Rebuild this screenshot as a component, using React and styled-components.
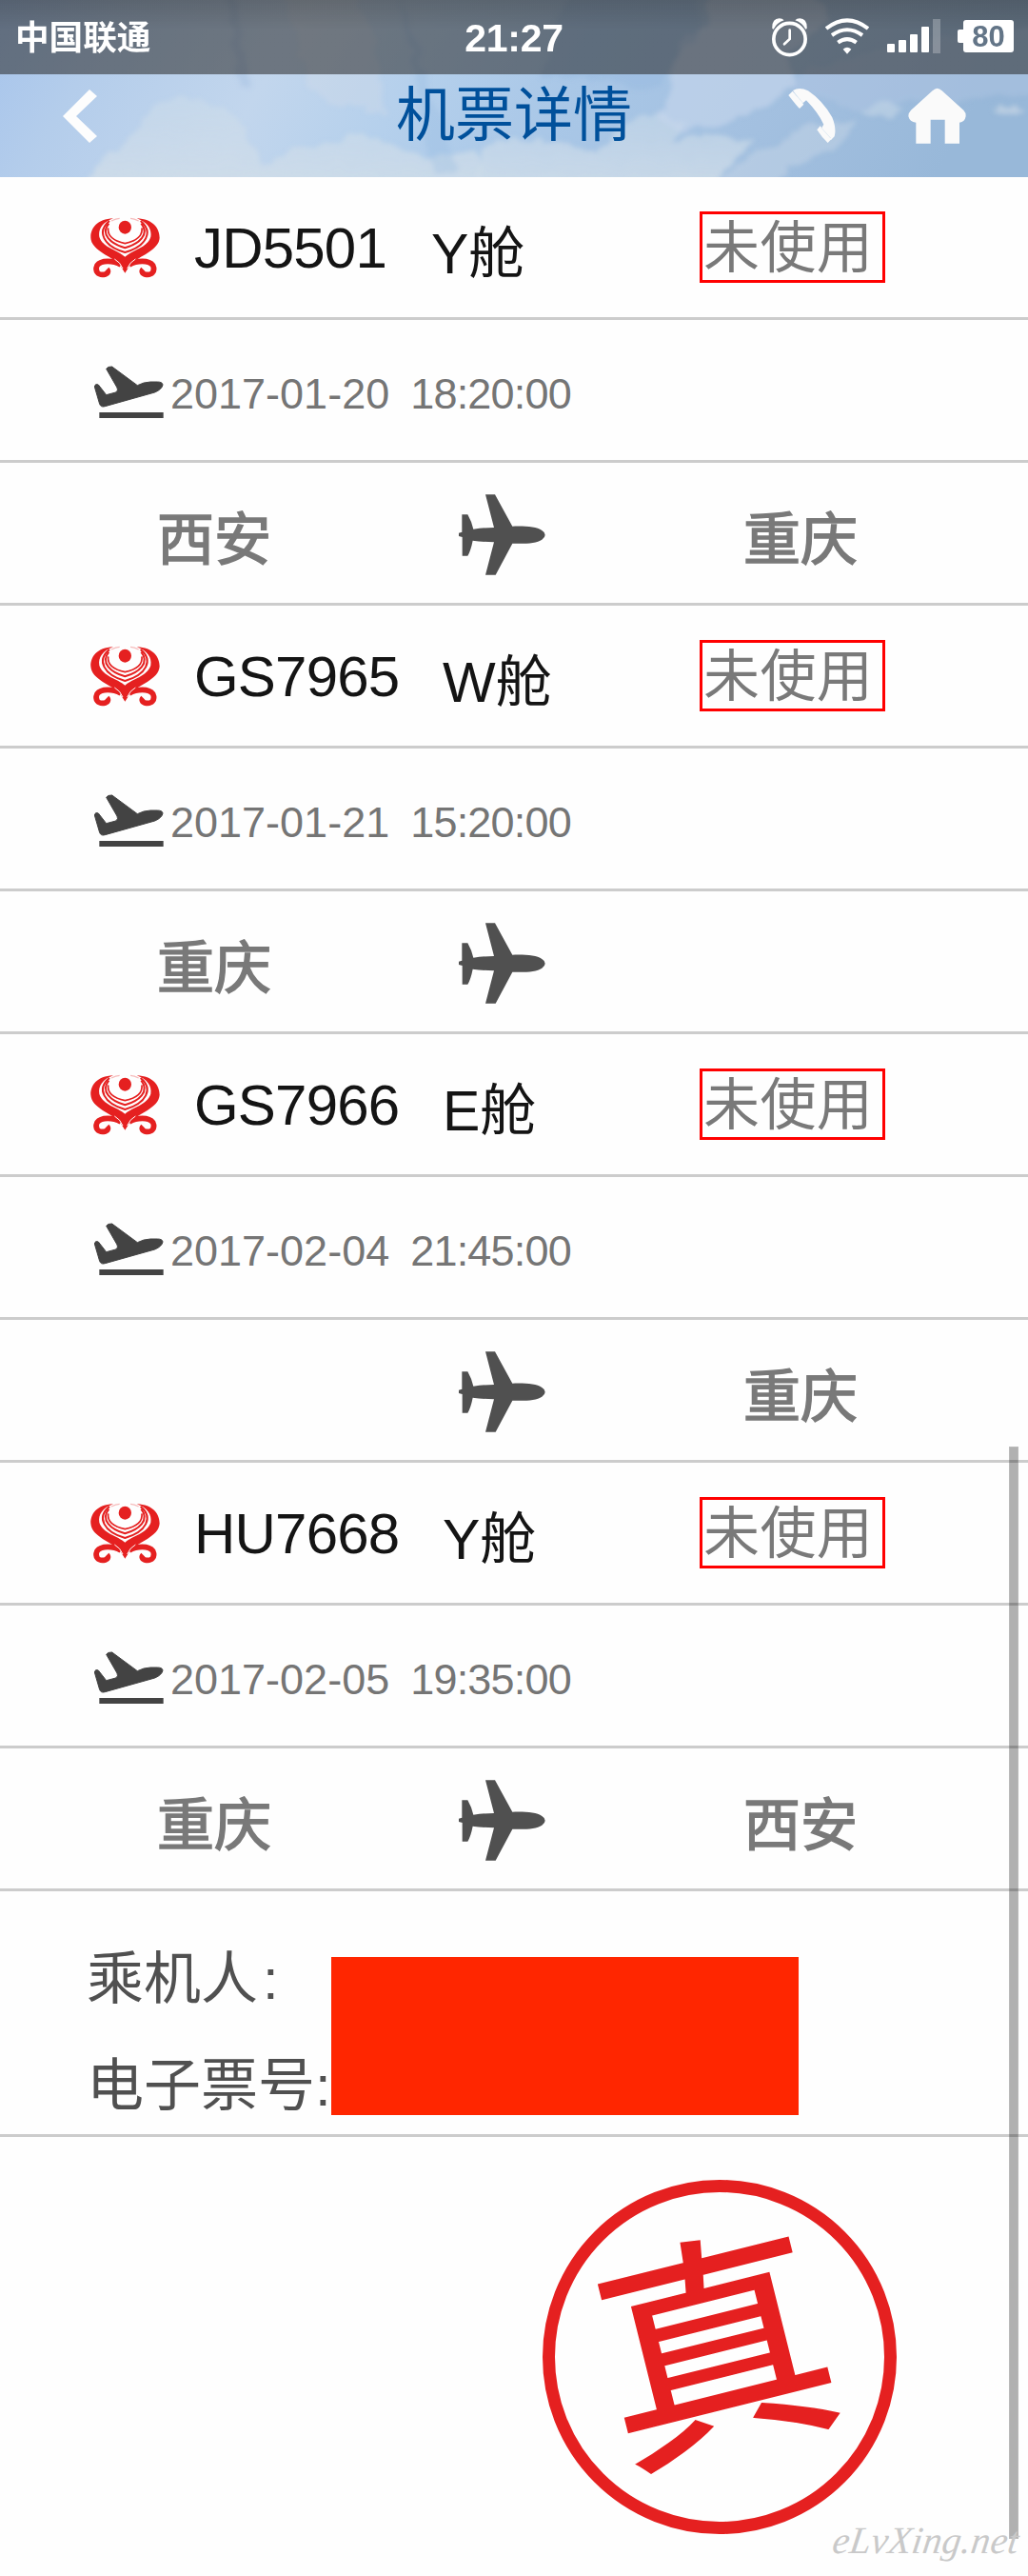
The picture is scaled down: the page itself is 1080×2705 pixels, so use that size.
import React from 'react'
import styled, { createGlobalStyle } from 'styled-components'

const GlobalStyle = createGlobalStyle`
    * {
        box-sizing: border-box;
    }
    body {
        margin: 0;
        background: #fefefe;
        font-family: "Liberation Sans", "Noto Sans CJK SC", sans-serif;
    }
    svg {
        display: block;
        flex: none;
    }
`

const Page = styled.div`
    position: relative;
    width: 1080px;
    height: 2705px;
    overflow: hidden;
    background: #fefefe;
`

const Header = styled.header`
    position: relative;
    height: 186px;
    overflow: hidden;
`

const SkyBackdrop = styled.svg`
    position: absolute;
    top: 0;
    left: 0;
`

const StatusBar = styled.div`
    position: relative;
    display: grid;
    grid-template-columns: 1fr auto 1fr;
    align-items: center;
    height: 78px;
    padding: 0 15px 0 16px;
    color: #fff;
    background: linear-gradient(rgba(36, 36, 36, 0.62), rgba(40, 40, 40, 0.55) 40%);
`

const Carrier = styled.span`
    font: bold 35.6px/40px "Noto Sans CJK SC", sans-serif;
    padding-bottom: 4px;
`

const Clock = styled.span`
    font-size: 41px;
    font-weight: bold;
    line-height: 44px;
    letter-spacing: -0.3px;
    padding: 2px 1px 0 0;
`

const StatusIcons = styled.div`
    display: flex;
    align-items: flex-start;
    justify-content: flex-end;
    height: 40px;
    gap: 19px;
`

const Battery = styled.div`
    display: flex;
    align-items: center;
    margin: 2px 0 0 -1px;

    &::before {
        content: "";
        width: 6px;
        height: 14px;
        border-radius: 2px 0 0 2px;
        background: #fff;
    }
`

const BatteryLevel = styled.span`
    width: 53px;
    height: 34px;
    border-radius: 3px;
    background: #fff;
    color: #637587;
    font-size: 31px;
    font-weight: bold;
    line-height: 36px;
    text-align: center;
`

const TitleBar = styled.div`
    position: relative;
    display: flex;
    align-items: flex-start;
    height: 108px;
    padding: 14px 66px;
`

const Title = styled.h1`
    flex: none;
    width: 248px;
    margin: -18px 164px 0 314px;
    color: #00509b;
    font: 400 62px/84px "Noto Sans CJK SC", sans-serif;
    white-space: nowrap;
`

const HomeLink = styled.a`
    margin-left: 76px;
`

const Row = styled.div`
    display: flex;
    align-items: center;
    height: 150px;
    border-bottom: 3px solid #ccc;
`

const FlightRow = styled(Row)`
    padding-left: 95px;
    color: #141414;
    font-size: 60px;
    line-height: 70px;
`

const FlightCode = styled.span`
    width: ${({ $width }) => $width}px;
    margin: 3px 0 0 36px;
    letter-spacing: -0.8px;
    white-space: nowrap;
`

const Cabin = styled.span`
    flex: 1;
    margin-top: 15px;
    font-size: 59px;
    white-space: nowrap;
`

const UseStatus = styled.span`
    flex: none;
    width: 195px;
    height: 75px;
    margin-right: 150px;
    padding-left: 1px;
    border: 3px solid #f00;
    color: #797979;
    font: 400 59px/62px "Noto Sans CJK SC", sans-serif;
    letter-spacing: 0.4px;
    white-space: nowrap;
`

const TimeRow = styled(Row)`
    padding: 4px 0 0 99px;
    color: #757575;
    font-size: 45px;
`

const FlightDate = styled.span`
    margin: 4px 0 0 7px;
`

const FlightTime = styled.span`
    margin: 4px 0 0 22px;
    letter-spacing: -0.8px;
`

const RouteRow = styled(Row)`
    padding: 3px 0 0 165px;
`

const City = styled.span`
    flex: none;
    width: 317px;
    margin-top: 1px;
    color: #797979;
    font: 400 60px/70px "Noto Sans CJK SC", sans-serif;
    -webkit-text-stroke: 1.6px #797979;

    svg + & {
        width: 240px;
        margin-left: 208px;
    }
`

const PassengerSection = styled.section`
    display: flex;
    height: 258px;
    padding: 0 0 0 91px;
    border-bottom: 3px solid #ccc;
`

const Labels = styled.div`
    width: 257px;
    padding-top: 34px;
    color: #505050;
    font: 400 60px/106px "Noto Sans CJK SC", sans-serif;
    white-space: nowrap;
`

const Latin = styled.span`
    font-family: "Liberation Sans", sans-serif;
    margin-left: ${({ $gap }) => $gap || 0}px;
`

const Redaction = styled.div`
    width: 491px;
    height: 166px;
    margin-top: 69px;
    background: #ff2600;
`

const StampArea = styled.div`
    display: flex;
    padding: 45px 0 0 570px;
`

const Stamp = styled.div`
    display: flex;
    align-items: center;
    justify-content: center;
    width: 372px;
    height: 372px;
    border: 13.5px solid #e52020;
    border-radius: 50%;
    color: #e52020;
`

const StampText = styled.span`
    font: 400 246px/246px "Noto Sans CJK SC", sans-serif;
    transform: translate(-9px, -24px) rotate(-14deg);
    -webkit-text-stroke: 1.5px #e52020;
`

const ScrollThumb = styled.div`
    position: absolute;
    top: 1519px;
    left: 1060px;
    width: 10px;
    height: 1147px;
    background: rgba(0, 0, 0, 0.3);
    box-shadow: inset 0 0 0 1px rgba(255, 255, 255, 0.12);
`

const Watermark = styled.span`
    position: absolute;
    right: 10px;
    bottom: 15px;
    color: #c9c9c9;
    font: italic 40px/44px "Liberation Serif", serif;
    letter-spacing: 0.3px;
    transform: skewX(-8deg);
`

const Sky = () => (
    <SkyBackdrop width="1080" height="186" viewBox="0 0 1080 186">
        <defs>
            <linearGradient id="sky" x1="0" x2="1" y1="0" y2="0.1">
                <stop offset="0" stopColor="#a6c4ec" />
                <stop offset="0.12" stopColor="#b4cdeb" />
                <stop offset="0.3" stopColor="#c2d6ed" />
                <stop offset="0.44" stopColor="#b5d0ec" />
                <stop offset="0.6" stopColor="#a9c7e7" />
                <stop offset="0.8" stopColor="#a3c0e0" />
                <stop offset="1" stopColor="#98b8d9" />
            </linearGradient>
            <linearGradient id="cloud" x1="0" x2="0" y1="0" y2="1">
                <stop offset="0" stopColor="#cddcea" stopOpacity="0.5" />
                <stop offset="1" stopColor="#d0dde8" stopOpacity="0.85" />
            </linearGradient>
            <filter id="soft" x="-10%" y="-10%" width="120%" height="120%">
                <feTurbulence type="fractalNoise" baseFrequency="0.05" numOctaves="3" seed="4" />
                <feDisplacementMap in="SourceGraphic" scale="16" xChannelSelector="R" yChannelSelector="G" />
                <feGaussianBlur stdDeviation="2.5" />
            </filter>
        </defs>
        <rect width="1080" height="186" fill="url(#sky)" />
        <g filter="url(#soft)">
            <path d="M80 202 L110 166 L135 148 L150 124 L172 106 L210 102 L250 122 L262 148 L280 172 L310 156 L345 150 L380 140 L420 156 L450 165 L500 158 L510 202Z" fill="url(#cloud)" />
            <path d="M500 202 L506 158 L540 145 L600 150 L625 160 L660 128 L690 118 L720 130 L705 150 L740 140 L790 150 L740 202Z" fill="url(#cloud)" />
            <path d="M740 202 L780 168 L820 148 L850 130 L900 128 L880 155 L830 175 L800 202Z" fill="#d0dde9" opacity="0.4" />
            <path d="M742 -15 L748 22 L718 40 L708 70 L706 100 L690 125 L720 140 L760 130 L790 118 L840 90 L828 60 L870 20 L850 -15Z" fill="#c8d7ec" opacity="0.6" />
            <path d="M828 92 L850 70 L900 60 L950 44 L1090 30 V100 L960 108 L900 118Z" fill="#b7c9e4" opacity="0.35" />
            <path d="M905 118 L930 108 L950 116 L935 124Z" fill="#ccdbea" opacity="0.5" />
            <path d="M1042 116 L1065 108 L1080 114 L1055 121Z" fill="#d0dce8" opacity="0.6" />
            <path d="M245 -15 L262 90 L250 90 L236 -15Z" fill="#9dbbe0" opacity="0.35" />
            <path d="M418 -15 L480 180 L455 180 L432 60Z" fill="#94b8e0" opacity="0.3" />
            <path d="M295 -15 L330 100 L405 120 L390 30 L370 -15Z" fill="#d4dde8" opacity="0.35" />
            <path d="M600 -15 L730 -15 L735 30 L690 90 L570 80Z" fill="#8fb4de" opacity="0.3" />
        </g>
    </SkyBackdrop>
)

const AlarmIcon = () => (
    <svg width="37" height="41" viewBox="33 29 111 123" fill="none" stroke="#fff">
        <path d="M34 62 Q32 32 56 30 Q66 30 71 36 Q48 44 38 64Z" fill="#fff" stroke="none" />
        <path d="M143 62 Q145 32 121 30 Q111 30 106 36 Q129 44 139 64Z" fill="#fff" stroke="none" />
        <circle cx="88.500" cy="95" r="50" strokeWidth="11" />
        <path d="M89 67 V95 L72 111" strokeWidth="8" strokeLinecap="round" />
    </svg>
)

const WifiIcon = () => (
    <svg width="46" height="38" viewBox="201 28 138 114" fill="none" stroke="#fff" strokeWidth="12">
        <path d="M204 61 Q270 9 336 61" />
        <path d="M222 82 Q270 48 318 82" />
        <path d="M241 105 Q270 84 299 105" />
        <path d="M257 126 Q270 115 283 126 L270 141Z" fill="#fff" stroke="none" />
    </svg>
)

const SignalIcon = () => (
    <svg width="56" height="37" viewBox="0 0 56 37" fill="#fff">
        <rect x="0" y="27" width="8" height="9" rx="1" />
        <rect x="12" y="23" width="8" height="13" rx="1" />
        <rect x="24" y="17" width="8" height="19" rx="1" />
        <rect x="36" y="9" width="8" height="27" rx="1" />
        <rect x="48" y="1" width="8" height="36" opacity="0.25" />
    </svg>
)

const BackIcon = () => (
    <svg width="36" height="60" viewBox="0 0 36 60">
        <path d="M0 30 L28 2 L36 9 L14 30 L36 51 L28 58Z" fill="#fdfdfd" />
    </svg>
)

const PhoneIcon = () => (
    <svg width="50" height="60" viewBox="83 246 150 180" fill="#fafafa">
        <path d="M98 255 Q118 242 146 256 Q192 287 222 340 Q236 376 229 400 L218 411 L186 378 L195 362 Q178 325 140 286 L127 297Z" />
        <path d="M84 270 L97 257 L132 299 L119 312 Q112 306 84 270Z" />
        <path d="M174 379 L184 367 L220 407 L208 420 Q190 404 174 379Z" />
        <path d="M101 260 L131 296 M187 372 L217 405" stroke="#d5e2ee" strokeWidth="2" />
    </svg>
)

const HomeIcon = () => (
    <svg width="61" height="60" viewBox="461 246 183 180">
        <path d="M553 248 Q560 248 568 256 L636 317 Q644 325 643 336 Q640 354 623 356 V422 H577 V347 H532 V422 H486 V356 Q466 354 462 336 Q462 325 470 317 L538 256 Q546 248 553 248Z" fill="#fafafa" />
    </svg>
)

const AirlineLogo = () => (
    <svg width="73" height="64" viewBox="32 38 219 192" fill="none" stroke="#e52020">
        <path d="M104 42 C52 44 32 74 33 103 C36 146 100 160 126 190 L141 214 L156 190 C182 160 247 146 250 103 C250 74 230 44 178 42 C212 54 226 76 222 100 C212 134 164 142 141 163 C118 142 70 134 60 100 C56 76 70 54 104 42Z" fill="#e52020" stroke="none" />
        <path d="M92 50 C50 84 74 130 141 149 C208 130 232 84 190 50" strokeWidth="6" />
        <path d="M90 58 C62 92 96 122 141 135 C186 122 220 92 192 58" strokeWidth="6" />
        <path d="M88 72 C84 104 118 116 141 121 C164 116 198 104 194 72" strokeWidth="5" />
        <path d="M98 50 Q112 42 124 42 M184 50 Q170 42 158 42" strokeWidth="4" opacity="0.3" />
        <ellipse cx="141" cy="70" rx="20" ry="21" fill="#e52020" stroke="none" />
        <path d="M128 188 C104 174 66 172 53 190 C44 210 58 221 74 219 C88 217 90 208 84 202" strokeWidth="17" />
        <path d="M154 188 C178 174 216 172 229 190 C238 210 224 221 208 219 C194 217 192 208 198 202" strokeWidth="17" />
        <path d="M108 170 Q126 180 134 200 M174 170 Q156 180 148 200" stroke="#fff" strokeWidth="3" />
    </svg>
)

const TakeoffIcon = () => (
    <svg width="73" height="56" viewBox="41 504 219 168" fill="#434343">
        <path d="M79 514 Q84 506 97 507 L177 566 Q196 556 218 555 H240 Q256 555 257 564 Q255 578 232 588 L75 632 Q62 636 58 625 L42 570 Q44 560 54 564 L79 596 L109 588 Q118 582 113 573Z" stroke="#434343" strokeWidth="3" />
        <rect x="57" y="651" width="202" height="18" />
    </svg>
)

const PlaneIcon = () => (
    <svg width="91" height="85" viewBox="38 25 273 255" fill="#505050">
        <path d="M122 26 H152 L207 126 C250 125 283 127 300 139 Q310 145 310 153 Q310 161 300 168 C283 180 250 181 207 180 L154 279 H122 L149 176 Q110 175 82 171 Q76 202 66 219 H49 V160 L38 157 V147 L48 144 V89 H66 Q78 110 84 135 Q115 130 149 130Z" />
    </svg>
)

const flights = [
    { code: 'JD5501', codeWidth: 249, cabin: 'Y舱', date: '2017-01-20', time: '18:20:00', from: '西安', to: '重庆' },
    { code: 'GS7965', codeWidth: 261, cabin: 'W舱', date: '2017-01-21', time: '15:20:00', from: '重庆', to: '' },
    { code: 'GS7966', codeWidth: 261, cabin: 'E舱', date: '2017-02-04', time: '21:45:00', from: '', to: '重庆' },
    { code: 'HU7668', codeWidth: 261, cabin: 'Y舱', date: '2017-02-05', time: '19:35:00', from: '重庆', to: '西安' },
]

const Flight = ({ code, codeWidth, cabin, date, time, from, to }) => (
    <>
        <FlightRow>
            <AirlineLogo />
            <FlightCode $width={codeWidth}>{code}</FlightCode>
            <Cabin>{cabin}</Cabin>
            <UseStatus>未使用</UseStatus>
        </FlightRow>
        <TimeRow>
            <TakeoffIcon />
            <FlightDate>{date}</FlightDate>
            <FlightTime>{time}</FlightTime>
        </TimeRow>
        <RouteRow>
            <City>{from}</City>
            <PlaneIcon />
            <City>{to}</City>
        </RouteRow>
    </>
)

const App = () => (
    <Page>
        <GlobalStyle />
        <Header>
            <Sky />
            <StatusBar>
                <Carrier>中国联通</Carrier>
                <Clock>21:27</Clock>
                <StatusIcons>
                    <AlarmIcon />
                    <WifiIcon />
                    <SignalIcon />
                    <Battery>
                        <BatteryLevel>80</BatteryLevel>
                    </Battery>
                </StatusIcons>
            </StatusBar>
            <TitleBar>
                <BackIcon />
                <Title>机票详情</Title>
                <PhoneIcon />
                <HomeLink>
                    <HomeIcon />
                </HomeLink>
            </TitleBar>
        </Header>
        {flights.map(flight => (
            <Flight key={flight.code} {...flight} />
        ))}
        <PassengerSection>
            <Labels>
                <div>乘机人<Latin $gap={5}>:</Latin></div>
                <div>电子票号<Latin>:</Latin></div>
            </Labels>
            <Redaction />
        </PassengerSection>
        <StampArea>
            <Stamp>
                <StampText>真</StampText>
            </Stamp>
        </StampArea>
        <ScrollThumb />
        <Watermark>eLvXing.net</Watermark>
    </Page>
)

export default App
